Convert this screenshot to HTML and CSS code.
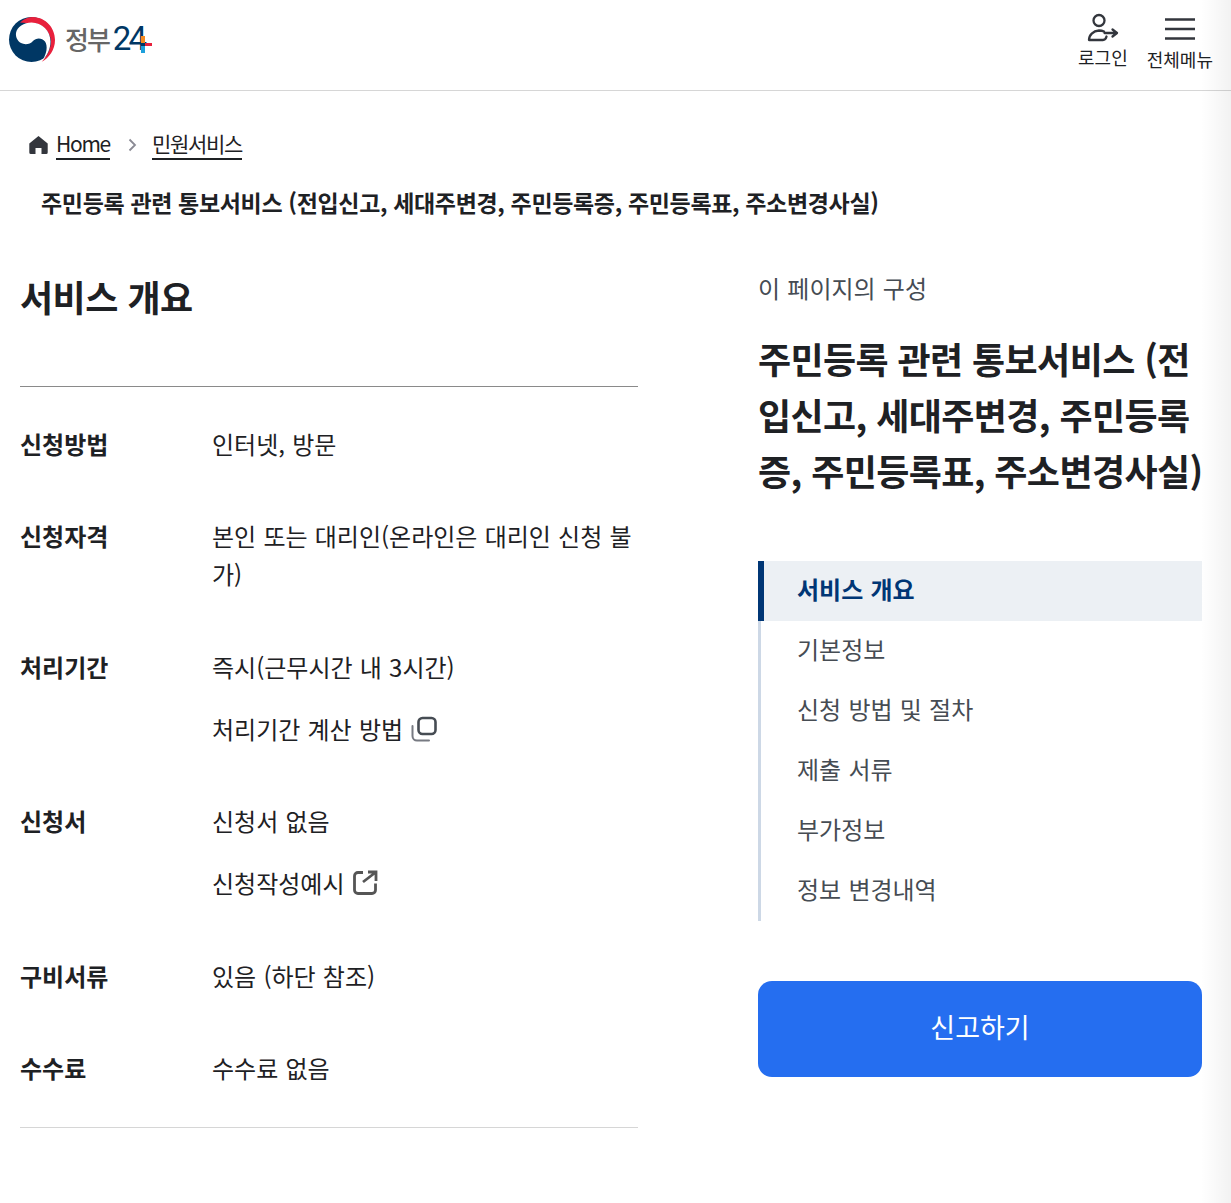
FILE: index.html
```html
<!DOCTYPE html>
<html lang="ko">
<head>
<meta charset="utf-8">
<title>서비스 개요</title>
<link rel="stylesheet" href="styles.css">
</head>
<body>
<div class="edge-shade"></div>
<header class="site-header">
  <a class="logo">
    <svg class="logo-mark" width="47" height="45" viewBox="0 0 47 45">
      <circle cx="23.500" cy="22.500" r="22.500" fill="#003764"/>
      <path d="M12 5.500C16 1.500 21 0 25 0 38 .5 47 11 47 23 47 33 41 41 33.700 44.800 40 38 43 31 43 24 42 14 34 6 24 6 20 6 16 6 12 5.500Z" fill="#e8203c"/>
      <path d="M8 16C9 10 16 5.500 23.500 5.500 34 5.500 42.500 14 42.500 24.500 42.500 32 39 39 33.700 44.500 39 37 40 29 37 24.500 34 20.500 28 20.500 25 24 22 27.500 16.500 28 13 26 9.500 24 7.500 20 8 16Z" fill="#fff"/>
    </svg>
    <span class="logo-text"><span class="logo-ko">정부</span><span class="logo-num">24</span></span>
    <svg class="logo-plus" width="11" height="17" viewBox="0 0 11 17"><rect x="0" y="0" width="4" height="7" fill="#f58a1f"/><rect x="4" y="7" width="7" height="3" fill="#e8203c"/><rect x="0" y="10" width="4" height="7" fill="#1ea0dc"/><rect x="0" y="7" width="4" height="3" fill="#003764"/></svg>
  </a>
  <nav class="header-actions">
    <a class="header-action header-login">
      <svg width="32" height="30" viewBox="0 0 32 30" fill="none" stroke="#33363d" stroke-width="2.300"><circle cx="12" cy="7.500" r="5.500"/><path d="M2 27c0-5 4-9 10-9.500 2 0 3.500.3 5 1M2 27H16c2 0 3-1.500 3.500-3.500M17.500 20H30M25.500 16.500 30 20l-4.500 3.500" stroke-linecap="round" stroke-linejoin="round"/></svg>
      <span>로그인</span>
    </a>
    <a class="header-action header-menu">
      <svg width="30" height="22" viewBox="0 0 30 22" fill="none" stroke="#33363d" stroke-width="2.700"><path d="M0 1.500h30M0 11h30M0 20.500h30"/></svg>
      <span>전체메뉴</span>
    </a>
  </nav>
</header>

<div class="breadcrumb">
  <svg class="home-icon" width="19" height="18" viewBox="0 0 19 18"><path d="M9.500 0 18.700 7.500V16.500A1.500 1.500 0 0 1 17.200 18H12.500V12H6.500V18H1.800A1.500 1.500 0 0 1 .3 16.500V7.500Z" fill="#33363d"/></svg>
  <a class="crumb crumb-home">Home</a>
  <svg class="crumb-sep" width="9" height="14" viewBox="0 0 9 14" fill="none" stroke="#8a8a94" stroke-width="1.800"><path d="M1.500 1.500 7 7l-5.500 5.500"/></svg>
  <a class="crumb">민원서비스</a>
</div>

<h1 class="page-title">주민등록 관련 통보서비스 (전입신고, 세대주변경, 주민등록증, 주민등록표, 주소변경사실)</h1>

<div class="layout">
  <main class="content">
    <h2 class="section-title">서비스 개요</h2>
    <dl class="info-list">
      <div class="info-row">
        <dt>신청방법</dt>
        <dd><p>인터넷, 방문</p></dd>
      </div>
      <div class="info-row">
        <dt>신청자격</dt>
        <dd><p>본인 또는 대리인(온라인은 대리인 신청 불가)</p></dd>
      </div>
      <div class="info-row">
        <dt>처리기간</dt>
        <dd>
          <p>즉시(근무시간 내 3시간)</p>
          <p class="link-line">처리기간 계산 방법
            <svg class="inline-icon" width="26" height="26" viewBox="0 0 26 26" fill="none" stroke="#464c53" stroke-width="2.600"><rect x="7.500" y="2" width="17" height="16" rx="4"/><path d="M1.500 10v10a4.500 4.500 0 0 0 4.500 4.500h12" stroke-linecap="round" stroke="#777a82" stroke-width="2"/></svg>
          </p>
        </dd>
      </div>
      <div class="info-row">
        <dt>신청서</dt>
        <dd>
          <p>신청서 없음</p>
          <p class="link-line">신청작성예시
            <svg class="inline-icon" width="26" height="26" viewBox="0 0 26 26" fill="none" stroke="#555" stroke-width="2.800"><path d="M10 2.500H5A3.500 3.500 0 0 0 1.500 6v14A3.500 3.500 0 0 0 5 23.500h14a3.500 3.500 0 0 0 3.500-3.500v-6.500M10 12 23 2M15 2h8v9"/></svg>
          </p>
        </dd>
      </div>
      <div class="info-row">
        <dt>구비서류</dt>
        <dd><p>있음 (하단 참조)</p></dd>
      </div>
      <div class="info-row">
        <dt>수수료</dt>
        <dd><p>수수료 없음</p></dd>
      </div>
    </dl>
  </main>

  <aside class="side">
    <p class="side-label">이 페이지의 구성</p>
    <h2 class="side-title">주민등록 관련 통보서비스 (전입신고, 세대주변경, 주민등록증, 주민등록표, 주소변경사실)</h2>
    <ul class="toc">
      <li class="toc-item is-active">서비스 개요</li>
      <li class="toc-item">기본정보</li>
      <li class="toc-item">신청 방법 및 절차</li>
      <li class="toc-item">제출 서류</li>
      <li class="toc-item">부가정보</li>
      <li class="toc-item">정보 변경내역</li>
    </ul>
    <button class="report-btn" type="button">신고하기</button>
  </aside>
</div>
</body>
</html>
```
FILE: styles.css
```css
* { box-sizing: border-box; }
html, body { margin: 0; padding: 0; }
body {
  background: #fff;
  color: #1e2124;
  font-family: "Noto Sans CJK KR", "Noto Sans", sans-serif;
  font-size: 24px;
  height: 1203px;
  overflow: hidden;
  position: relative;
}
p, h1, h2, ul, dl, dd, dt { margin: 0; padding: 0; }
ul { list-style: none; }

.edge-shade {
  position: absolute;
  top: 0; right: 0; bottom: 0;
  width: 30px;
  background: linear-gradient(to right, rgba(0,0,0,0), rgba(0,0,0,.05));
  pointer-events: none;
}

.site-header {
  height: 91px;
  border-bottom: 1px solid #d6d6d6;
  display: flex;
  justify-content: space-between;
  padding: 0 18px 0 8px;
}
.logo { display: flex; align-items: flex-start; padding-top: 17px; }
.logo-mark { display: block; flex: none; }
.logo-text { display: flex; align-items: baseline; margin-left: 10px; margin-top: 2px; line-height: 40px; }
.logo-ko { font-size: 26px; font-weight: 500; color: #666; letter-spacing: -2px; }
.logo-num { font-family: "Roboto", sans-serif; font-size: 33px; color: #003764; letter-spacing: -3px; margin-left: 4px; }
.logo-plus { margin-left: -3px; margin-top: 19px; flex: none; }

.header-actions { display: flex; gap: 19px; }
.header-action { display: flex; flex-direction: column; align-items: center; font-size: 18px; line-height: 24px; color: #1e2124; }
.header-login { padding-top: 13px; }
.header-login span { margin-top: 2px; }
.header-menu { padding-top: 18px; }
.header-menu span { margin-top: 7px; }

.breadcrumb {
  display: flex;
  align-items: center;
  padding: 38px 0 0 29px;
  height: 68px;
  font-size: 21px;
}
.home-icon { flex: none; margin-top: 1px; }
.crumb {
  margin-left: 9px;
  line-height: 29px;
  border-bottom: 2px solid #1e2124;
  letter-spacing: -1.300px;
  color: #1e2124;
  margin-top: 1px;
}
.crumb-home { margin-left: 8px; }
.crumb-sep { margin: 1px 15px 0 18px; flex: none; }
.crumb-sep + .crumb { margin-left: 0; }

.page-title {
  font-size: 23px;
  font-weight: 700;
  line-height: 32px;
  letter-spacing: -.34px;
  padding: 27px 0 0 41px;
}

.layout { display: flex; padding: 0 29px 0 20px; margin-top: 49px; }
.content { width: 618px; flex: none; }
.side { width: 444px; margin-left: 120px; flex: none; }

.section-title { font-size: 36px; font-weight: 700; line-height: 48px; margin-top: 5px; letter-spacing: -.5px; }

.info-list { margin-top: 66px; padding: 38px 0 40.300px; border-top: 1px solid #8a8a8a; border-bottom: 1px solid #d6d6d6; display: flex; flex-direction: column; gap: 54.400px; }
.info-row { display: flex; line-height: 38px; }
.info-row dt { width: 192px; flex: none; font-weight: 700; }
.info-row dd { flex: 1; display: flex; flex-direction: column; gap: 24px; word-spacing: .5px; }
.inline-icon { vertical-align: -3px; margin-left: 1px; }

.side-label { font-size: 24px; line-height: 36px; color: #464c53; margin-top: 3px; word-spacing: .5px; }
.side-title { font-size: 36px; font-weight: 700; line-height: 56px; margin: 24px -8px 0 0; letter-spacing: -.6px; }

.toc { margin-top: 63px; border-left: 3px solid #cdd8e6; word-spacing: .5px; }
.toc-item { height: 60px; line-height: 56px; padding-left: 36px; color: #464c53; }
.toc-item.is-active { margin-left: -3px; border-left: 6px solid #003675; background: #ecf0f4; color: #003675; font-weight: 700; padding-left: 33px; }

.report-btn {
  display: block;
  width: 100%;
  height: 96px;
  margin-top: 60px;
  padding: 0 0 6px;
  background: #256ef0;
  color: #fff;
  border: 0;
  border-radius: 14px;
  font: inherit;
  font-size: 27px;
}
```
